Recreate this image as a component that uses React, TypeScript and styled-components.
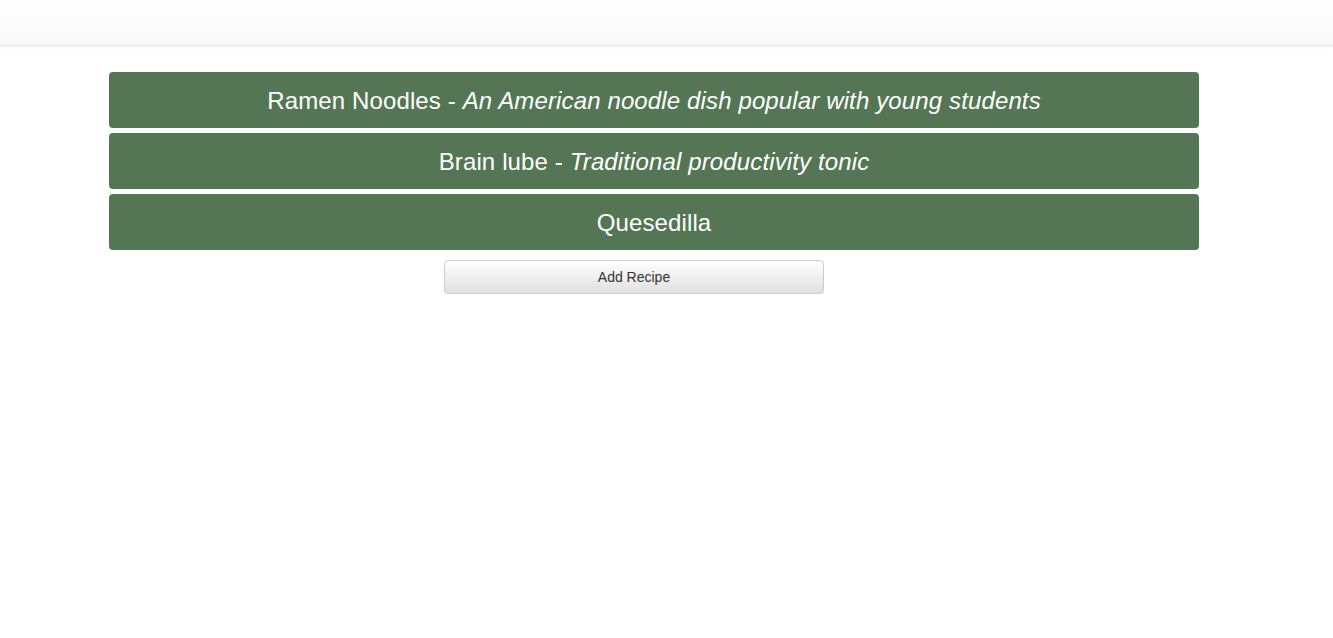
import React from "react";
import styled, { createGlobalStyle } from "styled-components";

const Global = createGlobalStyle`
  html, body { margin: 0; padding: 0; background: #fff; }
  body { font-family: "Liberation Sans", Arial, Helvetica, sans-serif; font-size: 14px; color: #333; }
`;

const Navbar = styled.div`
  height: 45px;
  background: linear-gradient(to bottom, #ffffff 0%, #f8f8f8 100%);
  border-bottom: 1px solid #e7e7e7;
  box-shadow: 0 1px 5px rgba(0, 0, 0, 0.05);
`;

const Main = styled.div`
  padding: 26px 134px 0 109px;
  display: flex;
  flex-direction: column;
  gap: 5px;
`;

const Panel = styled.div`
  height: 56px;
  box-sizing: border-box;
  padding-top: 2px;
  background: #547654;
  border-radius: 4px;
  display: flex;
  align-items: center;
  justify-content: center;
  color: #fff;
  font-size: 24px;
  letter-spacing: 0.13px;
  font-family: "Liberation Sans", Arial, Helvetica, sans-serif;
`;

const Desc = styled.em`
  font-style: italic;
`;

const ButtonRow = styled.div`
  display: flex;
  padding: 5px 0 0 335px;
`;

const Button = styled.button`
  width: 380px;
  height: 34px;
  border: 1px solid #ccc;
  border-radius: 4px;
  background: linear-gradient(to bottom, #ffffff 0%, #e0e0e0 100%);
  font-family: "Liberation Sans", Arial, Helvetica, sans-serif;
  font-size: 14px;
  color: #333;
  box-shadow: inset 0 1px 0 rgba(255, 255, 255, 0.15), 0 1px 1px rgba(0, 0, 0, 0.075);
  cursor: pointer;
`;

const recipes = [
  { name: "Ramen Noodles", desc: "An American noodle dish popular with young students" },
  { name: "Brain lube", desc: "Traditional productivity tonic" },
  { name: "Quesedilla", desc: "" },
];

export default function App() {
  return (
    <>
      <Global />
      <Navbar />
      <Main>
        {recipes.map((r) => (
          <Panel key={r.name}>
            {r.name}
            {r.desc && (
              <>
                &nbsp;-&nbsp;<Desc>{r.desc}</Desc>
              </>
            )}
          </Panel>
        ))}
        <ButtonRow>
          <Button>Add Recipe</Button>
        </ButtonRow>
      </Main>
    </>
  );
}
